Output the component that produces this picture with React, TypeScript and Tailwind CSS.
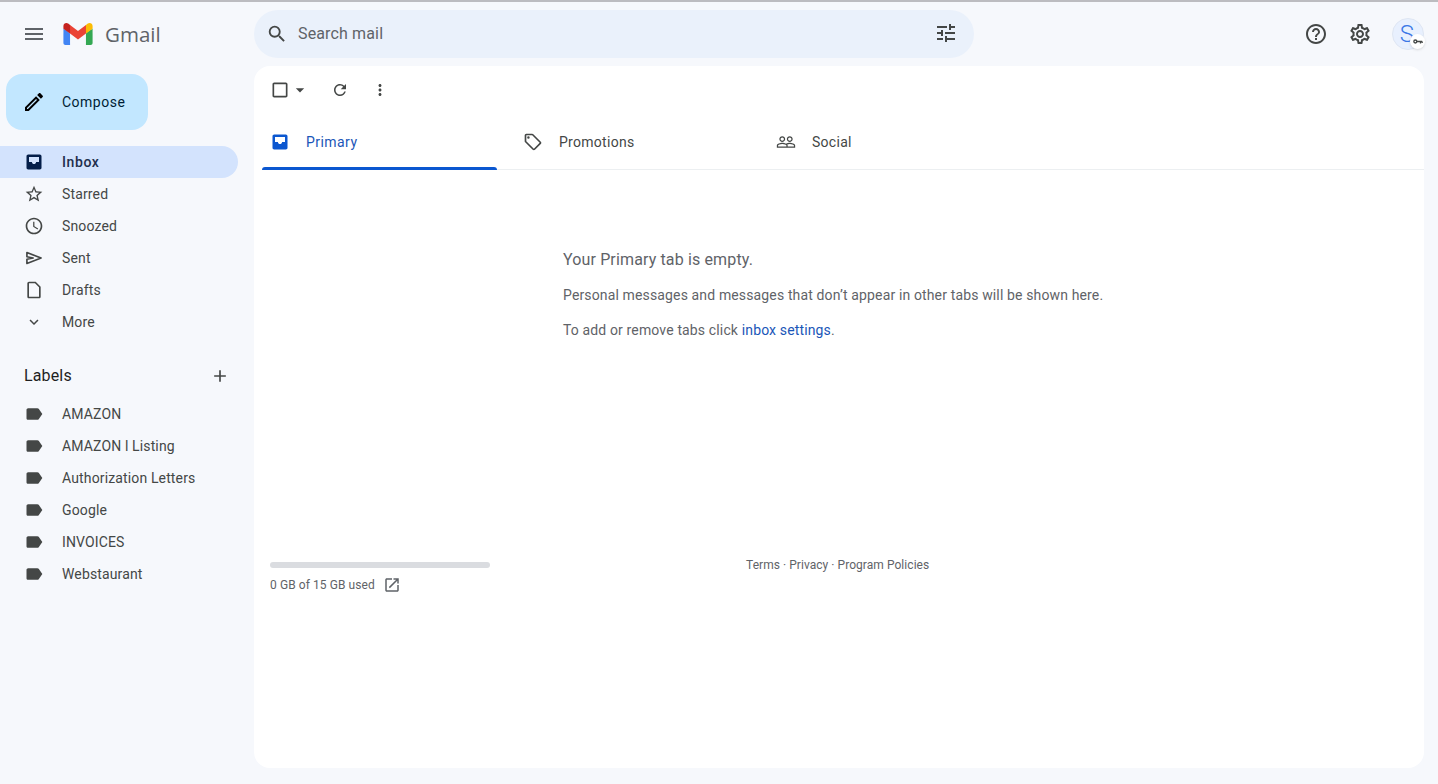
const icons = {
  menu: "M3 18h18v-2H3v2zm0-5h18v-2H3v2zm0-7v2h18V6H3z",
  search: "M15.5 14h-.79l-.28-.27A6.471 6.471 0 0 0 16 9.5 6.5 6.5 0 1 0 9.5 16c1.61 0 3.09-.59 4.23-1.57l.27.28v.79l5 4.99L20.49 19l-4.99-5zm-6 0C7.01 14 5 11.99 5 9.5S7.01 5 9.5 5 14 7.01 14 9.5 11.99 14 9.5 14z",
  tune: "M3 17v2h6v-2H3zM3 5v2h10V5H3zm10 16v-2h8v-2h-8v-2h-2v6h2zM7 9v2H3v2h4v2h2V9H7zm14 4v-2H11v2h10zm-6-4h2V7h4V5h-4V3h-2v6z",
  help: "M11 18h2v-2h-2v2zm1-16C6.48 2 2 6.48 2 12s4.48 10 10 10 10-4.48 10-10S17.52 2 12 2zm0 18c-4.41 0-8-3.59-8-8s3.59-8 8-8 8 3.59 8 8-3.59 8-8 8zm0-14c-2.21 0-4 1.79-4 4h2c0-1.1.9-2 2-2s2 .9 2 2c0 2-3 1.75-3 5h2c0-2.25 3-2.5 3-5 0-2.21-1.79-4-4-4z",
  settings: "M19.43 12.98c.04-.32.07-.64.07-.98 0-.34-.03-.66-.07-.98l2.11-1.65c.19-.15.24-.42.12-.64l-2-3.46c-.09-.16-.26-.25-.44-.25-.06 0-.12.01-.17.03l-2.49 1c-.52-.4-1.08-.73-1.69-.98l-.38-2.65C14.46 2.18 14.25 2 14 2h-4c-.25 0-.46.18-.49.42l-.38 2.65c-.61.25-1.17.59-1.69.98l-2.49-1c-.06-.02-.12-.03-.18-.03-.17 0-.34.09-.43.25l-2 3.46c-.13.22-.07.49.12.64l2.11 1.65c-.04.32-.07.65-.07.98 0 .33.03.66.07.98l-2.11 1.65c-.19.15-.24.42-.12.64l2 3.46c.09.16.26.25.44.25.06 0 .12-.01.17-.03l2.49-1c.52.4 1.08.73 1.69.98l.38 2.65c.03.24.24.42.49.42h4c.25 0 .46-.18.49-.42l.38-2.65c.61-.25 1.17-.59 1.69-.98l2.49 1c.06.02.12.03.18.03.17 0 .34-.09.43-.25l2-3.46c.12-.22.07-.49-.12-.64l-2.11-1.65zm-1.98-1.71c.04.31.05.52.05.73 0 .21-.02.43-.05.73l-.14 1.13.89.7 1.08.84-.7 1.21-1.27-.51-1.04-.42-.9.68c-.43.32-.84.56-1.25.73l-1.06.43-.16 1.13-.2 1.35h-1.4l-.19-1.35-.16-1.13-1.06-.43c-.43-.18-.83-.41-1.23-.71l-.91-.7-1.06.43-1.27.51-.7-1.21 1.08-.84.89-.7-.14-1.13c-.03-.31-.05-.54-.05-.74s.02-.43.05-.73l.14-1.13-.89-.7-1.08-.84.7-1.21 1.27.51 1.04.42.9-.68c.43-.32.84-.56 1.25-.73l1.06-.43.16-1.13.2-1.35h1.39l.19 1.35.16 1.13 1.06.43c.43.18.83.41 1.23.71l.91.7 1.06-.43 1.27-.51.7 1.21-1.07.85-.89.7.14 1.13zM12 8c-2.21 0-4 1.79-4 4s1.79 4 4 4 4-1.79 4-4-1.79-4-4-4zm0 6c-1.1 0-2-.9-2-2s.9-2 2-2 2 .9 2 2-.9 2-2 2z",
  pencil: "M3 17.25V21h3.75L17.81 9.94l-3.75-3.75L3 17.25zM5.92 19H5v-.92l9.06-9.06.92.92L5.92 19zM20.71 5.63l-2.34-2.34c-.2-.2-.45-.29-.71-.29s-.51.1-.7.29l-1.83 1.83 3.75 3.75 1.83-1.83c.39-.39.39-1.02 0-1.41z",
  inbox: "M19 3H5c-1.1 0-2 .9-2 2v14c0 1.1.9 2 2 2h14c1.1 0 2-.9 2-2V5c0-1.1-.9-2-2-2zm-1 9h-3.5c0 1.4-1.1 2.5-2.5 2.5s-2.5-1.1-2.5-2.5H6V6h12v6z",
  star: "M22 9.24l-7.19-.62L12 2 9.19 8.63 2 9.24l5.46 4.73L5.82 21 12 17.27 18.18 21l-1.63-7.03L22 9.24zM12 15.4l-3.76 2.27 1-4.28-3.32-2.88 4.38-.38L12 6.1l1.71 4.04 4.38.38-3.32 2.88 1 4.28L12 15.4z",
  clock: "M11.99 2C6.47 2 2 6.48 2 12s4.47 10 9.99 10C17.52 22 22 17.52 22 12S17.52 2 11.99 2zM12 20c-4.42 0-8-3.58-8-8s3.58-8 8-8 8 3.58 8 8-3.58 8-8 8zm.5-13H11v6l5.25 3.15.75-1.23-4.5-2.67z",
  draft: "M14 2H6c-1.1 0-2 .9-2 2v16c0 1.1.9 2 2 2h12c1.1 0 2-.9 2-2V8l-6-6zm4 18H6V4h7.17L18 8.83V20z",
  chevron: "M7.41 8.59 12 13.17l4.59-4.58L18 10l-6 6-6-6z",
  add: "M19 13h-6v6h-2v-6H5v-2h6V5h2v6h6v2z",
  label: "M17.63 5.84C17.27 5.33 16.67 5 16 5L5 5.01C3.9 5.01 3 5.9 3 7v10c0 1.1.9 1.99 2 1.99L16 19c.67 0 1.27-.33 1.63-.84L22 12l-4.37-6.16z",
  refresh: "M17.65 6.35A7.958 7.958 0 0 0 12 4c-4.42 0-7.99 3.58-7.99 8s3.57 8 7.99 8c3.73 0 6.84-2.55 7.73-6h-2.08A5.99 5.99 0 0 1 12 18c-3.31 0-6-2.69-6-6s2.69-6 6-6c1.66 0 3.14.69 4.22 1.78L13 11h7V4l-2.35 2.35z",
  more: "M12 8c1.1 0 2-.9 2-2s-.9-2-2-2-2 .9-2 2 .9 2 2 2zm0 2c-1.1 0-2 .9-2 2s.9 2 2 2 2-.9 2-2-.9-2-2-2zm0 6c-1.1 0-2 .9-2 2s.9 2 2 2 2-.9 2-2-.9-2-2-2z",
  tag: "M21.41 11.58l-9-9C12.05 2.22 11.55 2 11 2H4c-1.1 0-2 .9-2 2v7c0 .55.22 1.05.59 1.42l9 9c.36.36.86.58 1.41.58s1.05-.22 1.41-.59l7-7c.37-.36.59-.86.59-1.41s-.23-1.06-.59-1.42zM13 20.01 4 11V4h7v-.01l9 8.99-7 7.03zM6.5 5A1.5 1.5 0 1 0 6.5 8 1.5 1.5 0 1 0 6.5 5z",
  people: "M16.5 13c-1.2 0-3.07.34-4.5 1-1.43-.67-3.3-1-4.5-1C5.33 13 1 14.08 1 16.25V19h22v-2.75c0-2.17-4.33-3.25-6.5-3.25zm-4 4.5h-10v-1.25c0-.54 2.56-1.75 5-1.75s5 1.21 5 1.75v1.25zm9 0H14v-1.25c0-.46-.2-.86-.52-1.22.88-.3 1.96-.53 3.02-.53 2.44 0 5 1.21 5 1.75v1.25zM7.5 12c1.93 0 3.5-1.57 3.5-3.5S9.43 5 7.5 5 4 6.57 4 8.5 5.57 12 7.5 12zm0-5.5c1.1 0 2 .9 2 2s-.9 2-2 2-2-.9-2-2 .9-2 2-2zm9 5.5c1.93 0 3.5-1.57 3.5-3.5S18.43 5 16.5 5 13 6.57 13 8.5s1.57 3.5 3.5 3.5zm0-5.5c1.1 0 2 .9 2 2s-.9 2-2 2-2-.9-2-2 .9-2 2-2z",
  open: "M19 19H5V5h7V3H5c-1.11 0-2 .9-2 2v14c0 1.1.89 2 2 2h14c1.1 0 2-.9 2-2v-7h-2v7zM14 3v2h3.59l-9.83 9.83 1.41 1.41L19 6.41V10h2V3h-7z",
  checkbox: "M19 5v14H5V5h14m0-2H5c-1.1 0-2 .9-2 2v14c0 1.1.9 2 2 2h14c1.1 0 2-.9 2-2V5c0-1.1-.9-2-2-2z",
  caret: "M7 10l5 5 5-5z",
};

const Icon = ({ d, className }: { d: string; className: string }) => (
  <svg viewBox="0 0 24 24" fill="currentColor" className={className}>
    <path d={d} />
  </svg>
);

const SentIcon = () => (
  <svg viewBox="0 0 24 24" fill="none" stroke="currentColor" strokeWidth="2" strokeLinejoin="round" className="w-5 h-5">
    <path d="M3.5 5.5 20.5 12 3.5 18.5V13.5L11 12 3.5 10.5Z" />
  </svg>
);

const GmailLogo = () => (
  <svg viewBox="0 0 256 193" className="w-[30px] h-[22px]">
    <path fill="#4285F4" d="M58.182 192.05V93.14L27.507 65.077 0 49.504v125.091c0 9.658 7.825 17.455 17.455 17.455h40.727Z" />
    <path fill="#34A853" d="M197.818 192.05h40.727c9.659 0 17.455-7.826 17.455-17.455V49.505l-31.156 17.837-27.026 25.798v98.91Z" />
    <path fill="#EA4335" d="m58.182 93.14-4.174-38.647 4.174-36.989L128 69.868l69.818-52.364 4.669 34.992-4.669 40.644L128 145.504z" />
    <path fill="#FBBC04" d="M197.818 17.504V93.14L256 49.504V26.231c0-21.585-24.64-33.89-41.89-20.945l-16.292 12.218Z" />
    <path fill="#C5221F" d="m0 49.504 26.759 20.07L58.182 93.14V17.504L41.89 5.286C24.61-7.66 0 4.646 0 26.23v23.273Z" />
  </svg>
);

const labels = ["AMAZON", "AMAZON l Listing", "Authorization Letters", "Google", "INVOICES", "Webstaurant"];

const NavRow = ({ name, children }: { name: string; children: React.ReactNode }) => (
  <div className="h-8 flex items-center pl-[24px]">
    <div className="w-5 flex justify-center">{children}</div>
    <span className="ml-[18px]">{name}</span>
  </div>
);

const Tab = ({ name, icon, active }: { name: string; icon: string; active?: boolean }) => (
  <div className={`w-[235px] h-[55px] flex items-center pl-2 relative ${active ? "text-[#0b57d0]" : "text-[#444746]"}`}>
    <Icon d={icon} className="w-5 h-5" />
    <span className={`ml-[16px] text-sm ${active ? "text-[#1a56b8] tracking-[0.45px]" : "text-[#444746] tracking-[0.28px]"}`}>{name}</span>
    {active && <div className="absolute left-0 right-0 -bottom-px h-[3px] rounded-t bg-[#0b57d0]" />}
  </div>
);

export default function App() {
  return (
    <div className="w-[1438px] h-[784px] overflow-hidden bg-[#f6f8fc] border-t-2 border-[#bcbcc0] font-['Roboto',sans-serif] tracking-[0.14px] flex flex-col">
      {/* Header */}
      <header className="h-[64px] flex items-center shrink-0">
        <div className="w-[254px] flex items-center shrink-0 pl-[22px]">
          <Icon d={icons.menu} className="w-6 h-6 text-[#5f6368]" />
          <div className="ml-[17px] flex items-center">
            <GmailLogo />
            <span className="ml-3 text-[20.5px] leading-none tracking-normal text-[#5f6368] font-['Open_Sans',sans-serif]">Gmail</span>
          </div>
        </div>
        <div className="w-[720px] h-12 rounded-full bg-[#eaf1fb] flex items-center pl-3 pr-4">
          <Icon d={icons.search} className="w-[22px] h-[22px] text-[#444746]" />
          <span className="ml-[10px] text-base text-[#5f6368] flex-1">Search mail</span>
          <Icon d={icons.tune} className="w-6 h-6 text-[#444746] -mt-[2px]" />
        </div>
        <div className="ml-auto flex items-center pr-[14px]">
          <Icon d={icons.help} className="w-6 h-6 text-[#444746]" />
          <Icon d={icons.settings} className="w-6 h-6 text-[#444746] ml-5" />
          <div className="relative ml-[20px] w-8 h-8 rounded-full bg-[#e8f0fe] border border-[#dfe6f3] flex items-center justify-center pr-[2px] text-[#3b78e7] text-[24px] font-light leading-none">
            S
            <div className="absolute -right-[2px] bottom-0 w-[15px] h-[15px] rounded-full bg-white flex items-center justify-center shadow-sm">
              <svg viewBox="0 0 12 6" className="w-[10px] h-[5px]" fill="none" stroke="#444746" strokeWidth="1.6">
                <circle cx="2.8" cy="3" r="1.8" />
                <path d="M4.6 3H11M9 3v2.4M11 3v1.8" />
              </svg>
            </div>
          </div>
        </div>
      </header>

      <div className="flex flex-1 min-h-0">
        {/* Sidebar */}
        <aside className="w-[254px] shrink-0 pt-[8px]">
          <button className="ml-[6px] w-[142px] h-[56px] rounded-2xl bg-[#c2e7ff] flex items-center pl-[16px] text-[#001d35]">
            <Icon d={icons.pencil} className="w-6 h-6 text-black" />
            <span className="ml-[16px] text-sm tracking-[0.5px]">Compose</span>
          </button>
          <nav className="mt-4 text-sm text-[#444746]">
            <div className="w-[238px] h-8 rounded-r-full bg-[#d3e3fd] flex items-center pl-[24px] font-medium tracking-[0.6px] text-[#1f2f4d]">
              <Icon d={icons.inbox} className="w-5 h-5 text-[#041e49]" />
              <span className="ml-[18px]">Inbox</span>
            </div>
            <NavRow name="Starred"><Icon d={icons.star} className="w-5 h-5" /></NavRow>
            <NavRow name="Snoozed"><Icon d={icons.clock} className="w-5 h-5" /></NavRow>
            <NavRow name="Sent"><SentIcon /></NavRow>
            <NavRow name="Drafts"><Icon d={icons.draft} className="w-5 h-5" /></NavRow>
            <NavRow name="More"><Icon d={icons.chevron} className="w-[18px] h-[18px]" /></NavRow>
          </nav>
          <div className="mt-[22px] h-8 flex items-center justify-between pl-[24px] pr-[24px] text-[#1f1f1f]">
            <span className="text-base">Labels</span>
            <Icon d={icons.add} className="w-5 h-5 text-[#444746]" />
          </div>
          <div className="mt-[6px] text-sm text-[#444746]">
            {labels.map((l) => (
              <NavRow key={l} name={l}><Icon d={icons.label} className="w-5 h-5" /></NavRow>
            ))}
          </div>
        </aside>

        {/* Main panel */}
        <main className="w-[1170px] h-[702px] bg-white rounded-2xl flex flex-col">
          <div className="h-[48px] flex items-center pl-[16px] text-[#444746] shrink-0">
            <Icon d={icons.checkbox} className="w-5 h-5" />
            <Icon d={icons.caret} className="w-5 h-5" />
            <Icon d={icons.refresh} className="w-[18px] h-[18px] ml-[21px]" />
            <Icon d={icons.more} className="w-[18px] h-[18px] ml-[22px]" />
          </div>
          <div className="ml-2 flex gap-[18px] border-b border-[#eceff1] shrink-0">
            <Tab name="Primary" icon={icons.inbox} active />
            <Tab name="Promotions" icon={icons.tag} />
            <Tab name="Social" icon={icons.people} />
          </div>
          <div className="pl-[309px] pt-[80px] text-[#5f6368] h-[392px] shrink-0">
            <p className="text-base leading-5">Your Primary tab is empty.</p>
            <p className="text-sm leading-5 mt-[15px]">Personal messages and messages that don’t appear in other tabs will be shown here.</p>
            <p className="text-sm leading-5 mt-[15px]">
              To add or remove tabs click <span className="text-[#1a56b8]">inbox settings</span>.
            </p>
          </div>
          <div className="flex pl-4 text-xs text-[#5f6368]">
            <div className="w-[220px]">
              <div className="h-[6px] rounded-full bg-[#dadce0]" />
              <div className="mt-2 flex items-center tracking-[0.08px]">
                <span>0 GB of 15 GB used</span>
                <Icon d={icons.open} className="w-[18px] h-[18px] ml-2" />
              </div>
            </div>
            <div className="ml-[256px] -mt-[5px] tracking-[0.05px]">Terms · Privacy · Program Policies</div>
          </div>
        </main>
      </div>
    </div>
  );
}
